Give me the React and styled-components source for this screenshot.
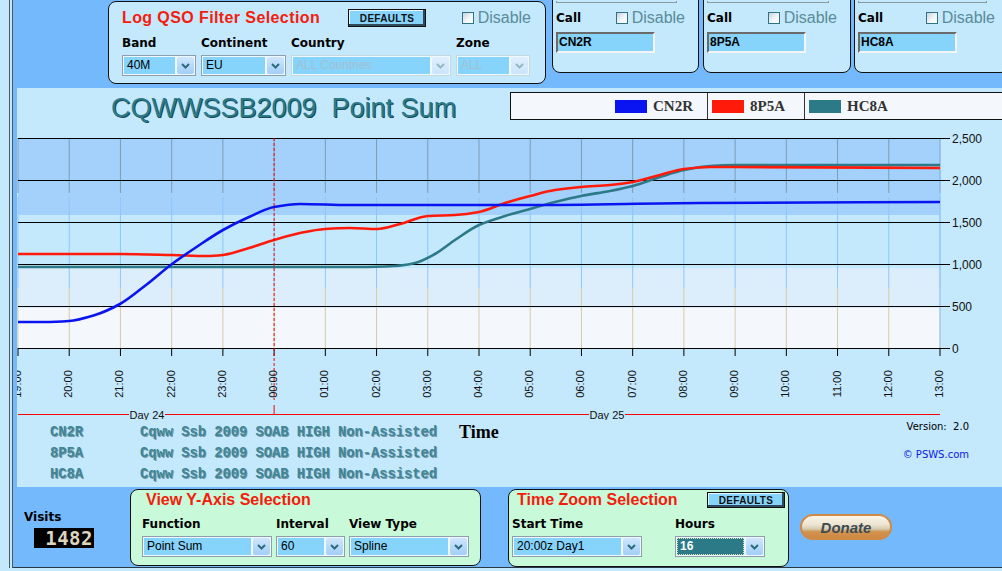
import { Fragment } from 'react';
import styled, { createGlobalStyle } from 'styled-components';

const GlobalStyle = createGlobalStyle`
  html, body { margin: 0; padding: 0; }
  body {
    background: #c4e8fc;
    font-family: "Liberation Sans", Arial, sans-serif;
    overflow: hidden;
  }
`;

const LIGHT = '#c4e8fc';
const BLUE = '#74b9fc';
const FIELD = '#86d4fc';
const RED = '#f41c0c';
const TEAL = '#2c7a88';

const Page = styled.div`
  display: flex;
  width: 1002px;
  height: 571px;
  overflow: hidden;
  background: ${LIGHT};
`;

const LeftRail = styled.div`
  width: 9px;
  flex-shrink: 0;
  height: 568px;
  border-right: 4px double #4b5860;
`;

const Main = styled.div`
  flex: 1;
  display: flex;
  flex-direction: column;
  height: 568px;
  box-sizing: border-box;
  border-bottom: 1px solid #2a3a44;
  background: ${BLUE};
  padding-left: 4px;
  min-width: 0;
`;

const TopBar = styled.div`
  display: flex;
  align-items: flex-start;
  height: 88px;
  flex-shrink: 0;
`;

const FilterPanel = styled.div`
  margin: 1px 0 0 91px;
  width: 438px;
  height: 83px;
  box-sizing: border-box;
  border: 1px solid #111;
  border-radius: 8px;
  background: ${LIGHT};
  padding: 7px 14px 0 13px;
  flex-shrink: 0;
`;

const PanelHead = styled.div`
  display: flex;
  align-items: center;
  height: 18px;
`;

const PanelTitle = styled.div`
  color: ${RED};
  font: bold 16px "Liberation Sans", Arial, sans-serif;
  letter-spacing: ${p => p.$spacing || 0}px;
  padding-left: ${p => p.$indent || 0}px;
  white-space: nowrap;
`;

const DefaultsButton = styled.div`
  margin-left: ${p => p.$left || 'auto'};
  width: ${p => p.$w}px;
  height: ${p => p.$h}px;
  box-sizing: border-box;
  border: 1px solid #111;
  background: ${FIELD};
  box-shadow: inset -2px -2px 0 #2f4a5c, inset 1px 1px 0 #e8f6ff;
  font: bold 10px "Liberation Sans", Arial, sans-serif;
  letter-spacing: 0.3px;
  display: flex;
  align-items: center;
  justify-content: center;
  color: #111;
`;

const DisableWrap = styled.div`
  margin-left: auto;
  display: flex;
  align-items: center;
  gap: 4px;
  color: #5a8c99;
  font: 16px "Liberation Sans", Arial, sans-serif;
`;

const CheckBox = styled.div`
  width: 12px;
  height: 12px;
  box-sizing: border-box;
  border: 1px solid #2f7482;
  background: linear-gradient(135deg, #c8d2dc 0%, #f2f6fa 55%, #ffffff 100%);
`;

const FieldGrid = styled.div`
  display: grid;
  grid-template-columns: ${p => p.$cols};
  column-gap: ${p => p.$gap}px;
  row-gap: 5px;
  margin-top: ${p => p.$top}px;
`;

const FieldLabel = styled.div`
  font: bold 12px "DejaVu Sans", Verdana, sans-serif;
  line-height: 14px;
  color: #000;
  white-space: nowrap;
`;

const SelectBox = styled.div`
  display: flex;
  height: 21px;
  box-sizing: border-box;
  border: 1px solid ${p => (p.$disabled ? '#c6d8dc' : '#8e9eac')};
  background: #eef8ff;
  padding: 1px;
  gap: 2px;
`;

const SelectValue = styled.div`
  flex: 1;
  min-width: 0;
  background: ${p => (p.$focused ? TEAL : FIELD)};
  color: ${p => (p.$disabled ? '#a4bfcc' : p.$focused ? '#fff' : '#000')};
  font: 12px "Liberation Sans", Arial, sans-serif;
  font-weight: ${p => (p.$focused ? 'bold' : 'normal')};
  line-height: 17px;
  padding-left: 3px;
  outline: ${p => (p.$focused ? '1px dotted #d8e8b0' : 'none')};
  outline-offset: -1px;
  white-space: nowrap;
  overflow: hidden;
`;

const SelectArrow = styled.div`
  width: 17px;
  border-radius: 2px;
  background: linear-gradient(#cfe6fc, #a2cef8);
  display: flex;
  align-items: center;
  justify-content: center;
  opacity: ${p => (p.$disabled ? 0.45 : 1)};
`;

const CallPanel = styled.div`
  margin: -10px 0 0 ${p => p.$left}px;
  width: ${p => p.$w}px;
  height: 83px;
  box-sizing: border-box;
  border: 1px solid #111;
  border-radius: 8px;
  background: ${LIGHT};
  padding: 10px 13px 0 3px;
  flex-shrink: 0;
`;

const Stub = styled.div`
  height: 1px;
  margin-right: 8px;
  border: 1px solid #8a9aa0;
  border-top: none;
`;

const CallRow = styled.div`
  display: flex;
  align-items: center;
  height: 14px;
  margin-top: 8px;
`;

const CallInput = styled.div`
  margin-top: 7px;
  width: 99px;
  height: 21px;
  box-sizing: border-box;
  border: 2px solid;
  border-color: #6a6a6a #f4f4f4 #f4f4f4 #6a6a6a;
  background: ${FIELD};
  font: bold 12px "Liberation Sans", Arial, sans-serif;
  line-height: 17px;
  padding-left: 1px;
  color: #000;
`;

const ChartArea = styled.div`
  height: 399px;
  flex-shrink: 0;
  background: ${LIGHT};
  display: flex;
  flex-direction: column;
  overflow: hidden;
`;

const ChartHead = styled.div`
  display: grid;
  grid-template-columns: 493px 1fr;
  height: 40px;
  flex-shrink: 0;
`;

const ChartTitle = styled.div`
  padding: 5px 0 0 94px;
  line-height: 30px;
  font: 27px "Liberation Sans", Arial, sans-serif;
  color: ${TEAL};
  text-shadow: 1px 1px 0 #174b56;
  white-space: pre;
`;

const Legend = styled.div`
  margin: 4px -10px 0 0;
  height: 28px;
  box-sizing: border-box;
  border: 1px solid #111;
  background: #f4f8fc;
  display: flex;
  padding-left: 104px;
`;

const LegendItem = styled.div`
  display: flex;
  align-items: center;
  gap: 6px;
  padding: 0 14px 0 ${p => (p.$first ? 0 : 4)}px;
  border-right: ${p => (p.$last ? 'none' : '1px solid #333')};
`;

const Swatch = styled.div`
  width: 32px;
  height: 13px;
  background: ${p => p.$color};
`;

const LegendLabel = styled.div`
  width: 40px;
  font: bold 15px "Liberation Serif", "Times New Roman", serif;
  color: #333;
`;

const Plot = styled.svg`
  display: block;
  flex-shrink: 0;
`;

const Info = styled.div`
  display: flex;
  height: 67px;
  box-sizing: border-box;
  padding: 2px 33px 0 33px;
`;

const EntryGrid = styled.div`
  display: grid;
  grid-template-columns: 90px auto;
  grid-auto-rows: 21px;
  align-items: center;
  font: bold 13.75px "Liberation Mono", "Courier New", monospace;
  color: #3f8696;
  text-shadow: 1px 1px 0 rgba(22, 52, 62, 0.45);
  white-space: pre;
`;

const TimeLabel = styled.div`
  margin-left: 22px;
  line-height: 21px;
  font: bold 18px "Liberation Serif", "Times New Roman", serif;
  color: #000;
`;

const Meta = styled.div`
  margin-left: auto;
  display: flex;
  flex-direction: column;
  align-items: flex-end;
  font: 10px "DejaVu Sans", Verdana, sans-serif;
  line-height: 10px;
  white-space: pre;
`;

const Credit = styled.div`
  margin-top: 18px;
  color: #0a18e8;
`;

const BottomBar = styled.div`
  display: flex;
  align-items: flex-start;
  height: 80px;
`;

const VisitsBlock = styled.div`
  width: 106px;
  margin-left: 7px;
  padding-top: 23px;
  flex-shrink: 0;
`;

const VisitsLabel = styled.div`
  font: bold 12px "DejaVu Sans", Verdana, sans-serif;
  line-height: 14px;
`;

const Counter = styled.div`
  margin: 4px 0 0 10px;
  width: 60px;
  height: 20px;
  background: #000;
  color: #ddd4bc;
  font: bold 19px "DejaVu Sans Mono", monospace;
  line-height: 20px;
  text-align: right;
  letter-spacing: 0.5px;
  padding-right: 1px;
  box-sizing: border-box;
  overflow: hidden;
`;

const GreenPanel = styled.div`
  margin: 2px 0 0 ${p => p.$left || 0}px;
  width: ${p => p.$w}px;
  height: ${p => p.$h}px;
  box-sizing: border-box;
  border: 1px solid #111;
  border-radius: 8px;
  background: #c8f9d8;
  padding: 1px ${p => p.$right || 0}px 0 ${p => p.$pad}px;
  flex-shrink: 0;
`;

const DonateButton = styled.div`
  margin: 27px 0 0 11px;
  width: 92px;
  height: 26px;
  box-sizing: border-box;
  border: 2px solid #d08a44;
  border-radius: 13px;
  background: linear-gradient(#fbf6ea 0%, #ece4d0 40%, #d6ccb2 58%, #d2924e 72%, #cf8a46 100%);
  display: flex;
  align-items: center;
  justify-content: center;
  font: italic bold 15px "Liberation Sans", Arial, sans-serif;
  color: #3e4a52;
  flex-shrink: 0;
`;

function Chevron() {
  return (
    <svg width="9" height="6" viewBox="0 0 9 6">
      <path d="M1 1 L4.5 4.5 L8 1" fill="none" stroke="#2e6c7c" strokeWidth="2" />
    </svg>
  );
}

function Select({ value, disabled, focused }) {
  return (
    <SelectBox $disabled={disabled}>
      <SelectValue $disabled={disabled} $focused={focused}>{value}</SelectValue>
      <SelectArrow $disabled={disabled}><Chevron /></SelectArrow>
    </SelectBox>
  );
}

function Disable() {
  return (
    <DisableWrap>
      <CheckBox />
      Disable
    </DisableWrap>
  );
}

// chart geometry: svg origin sits at page (17, 128)
const HOUR = 922 / 18;
const hx = i => 1 + i * HOUR;
const vy = v => 220 - v * 0.084;

function monotone(raw) {
  const pts = raw.map(([x, y]) => [x - 17, y - 128]);
  const n = pts.length;
  const dx = [];
  const m = [];
  for (let i = 0; i < n - 1; i++) {
    dx[i] = pts[i + 1][0] - pts[i][0];
    m[i] = (pts[i + 1][1] - pts[i][1]) / dx[i];
  }
  const t = [m[0]];
  for (let i = 1; i < n - 1; i++) {
    if (m[i - 1] * m[i] <= 0) t[i] = 0;
    else {
      const w1 = 2 * dx[i] + dx[i - 1];
      const w2 = dx[i] + 2 * dx[i - 1];
      t[i] = (w1 + w2) / (w1 / m[i - 1] + w2 / m[i]);
    }
  }
  t[n - 1] = m[n - 2];
  let d = `M${pts[0][0]},${pts[0][1]}`;
  for (let i = 0; i < n - 1; i++) {
    const h = dx[i] / 3;
    d += ` C${pts[i][0] + h},${pts[i][1] + t[i] * h} ${pts[i + 1][0] - h},${pts[i + 1][1] - t[i + 1] * h} ${pts[i + 1][0]},${pts[i + 1][1]}`;
  }
  return d;
}

const series = [
  {
    color: '#2c7a88',
    points: [[18, 267], [300, 267], [360, 267], [395, 266], [415, 263], [435, 254], [455, 240], [479, 225], [505, 216], [530, 209], [555, 202], [581, 196], [610, 191], [633, 186], [660, 177], [684, 170], [710, 166], [735, 165], [940, 165]],
  },
  {
    color: '#ff1a0a',
    points: [[18, 254], [120, 254], [172, 255], [207, 256], [223, 255], [249, 248], [274, 240], [300, 233], [325, 229], [350, 228], [377, 229], [400, 224], [428, 216], [455, 215], [479, 212], [505, 203], [530, 196], [555, 190], [581, 187], [610, 185], [633, 182], [660, 175], [684, 169], [710, 167], [735, 167], [940, 168]],
  },
  {
    color: '#0a14f0',
    points: [[18, 322], [45, 322], [69, 321], [95, 315], [120, 304], [146, 285], [172, 264], [198, 246], [223, 230], [249, 217], [274, 207], [300, 204], [350, 205], [428, 205], [530, 205], [700, 203], [940, 202]],
  },
];

const yTicks = [2500, 2000, 1500, 1000, 500, 0];
const hours = Array.from({ length: 19 }, (_, i) => `${String((19 + i) % 24).padStart(2, '0')}:00`);

function PointChart() {
  return (
    <Plot width="985" height="292" viewBox="0 0 985 292">
      <rect x="1" y="10" width="922" height="77" fill="#a4d0fc" />
      <rect x="1" y="140" width="922" height="40" fill="#dceefc" />
      <rect x="1" y="180" width="922" height="40" fill="#f4f8fc" />

      {hours.map((_, i) => (
        <g key={i}>
          <line x1={hx(i)} x2={hx(i)} y1="10" y2="65" stroke="#7c9cb4" />
          <line x1={hx(i)} x2={hx(i)} y1="69" y2="160" stroke="#8ec6fa" />
          <line x1={hx(i)} x2={hx(i)} y1="160" y2="220" stroke="#d6cba8" />
          <line x1={hx(i)} x2={hx(i)} y1="220" y2="228" stroke="#000" />
        </g>
      ))}
      <line x1="923" x2="923" y1="10" y2="220" stroke="#8ec6fa" />

      {yTicks.map(v => (
        <g key={v}>
          <line x1="1" x2="933" y1={vy(v) + 0.5} y2={vy(v) + 0.5} stroke="#000" />
          <text x="935" y={vy(v) + 1} dominantBaseline="central" fontSize="12" fontFamily="Liberation Sans, Arial, sans-serif" fill="#111">
            {v.toLocaleString('en-US')}
          </text>
        </g>
      ))}

      {series.map(s => (
        <path key={s.color} d={monotone(s.points)} fill="none" stroke={s.color} strokeWidth="2.6" strokeLinejoin="round" />
      ))}

      <line x1={hx(5)} x2={hx(5)} y1="10" y2="272" stroke="#ff0000" strokeDasharray="3 2" />
      <line x1={hx(5)} x2={hx(5)} y1="277" y2="286" stroke="#ff0000" />

      {hours.map((h, i) => (
        <text
          key={h + i}
          x={hx(i) - 1}
          y="256"
          transform={`rotate(-90 ${hx(i) - 1} 256)`}
          textAnchor="middle"
          dominantBaseline="central"
          fontSize="11"
          fontFamily="Liberation Sans, Arial, sans-serif"
          fill="#111"
        >
          {h}
        </text>
      ))}

      <line x1="1" x2="923" y1="286.5" y2="286.5" stroke="#ff0000" />
      <rect x="112" y="282" width="36" height="10" fill={LIGHT} />
      <text x="130" y="291" textAnchor="middle" fontSize="11" fontFamily="Liberation Sans, Arial, sans-serif" fill="#111">Day 24</text>
      <rect x="572" y="282" width="36" height="10" fill={LIGHT} />
      <text x="590" y="291" textAnchor="middle" fontSize="11" fontFamily="Liberation Sans, Arial, sans-serif" fill="#111">Day 25</text>
    </Plot>
  );
}

const entries = [
  ['CN2R', 'Cqww Ssb 2009 SOAB HIGH Non-Assisted'],
  ['8P5A', 'Cqww Ssb 2009 SOAB HIGH Non-Assisted'],
  ['HC8A', 'Cqww Ssb 2009 SOAB HIGH Non-Assisted'],
];

const calls = [
  { call: 'CN2R', left: 6, w: 147 },
  { call: '8P5A', left: 4, w: 148 },
  { call: 'HC8A', left: 3, w: 155 },
];

function App() {
  return (
    <Page>
      <GlobalStyle />
      <LeftRail />
      <Main>
        <TopBar>
          <FilterPanel>
            <PanelHead>
              <PanelTitle $spacing={0.4}>Log QSO Filter Selection</PanelTitle>
              <DefaultsButton $left="28px" $w={78} $h={18}>DEFAULTS</DefaultsButton>
              <Disable />
            </PanelHead>
            <FieldGrid $cols="74px 85px 160px 74px" $gap={5} $top={9}>
              <FieldLabel>Band</FieldLabel>
              <FieldLabel>Continent</FieldLabel>
              <FieldLabel>Country</FieldLabel>
              <FieldLabel>Zone</FieldLabel>
              <Select value="40M" />
              <Select value="EU" />
              <Select value="ALL Countries" disabled />
              <Select value="ALL" disabled />
            </FieldGrid>
          </FilterPanel>

          {calls.map(c => (
            <CallPanel key={c.call} $left={c.left} $w={c.w}>
              <Stub />
              <CallRow>
                <FieldLabel>Call</FieldLabel>
                <Disable />
              </CallRow>
              <CallInput>{c.call}</CallInput>
            </CallPanel>
          ))}
        </TopBar>

        <ChartArea>
          <ChartHead>
            <ChartTitle>{'CQWWSSB2009  Point Sum'}</ChartTitle>
            <Legend>
              <LegendItem $first>
                <Swatch $color="#0a14f0" />
                <LegendLabel>CN2R</LegendLabel>
              </LegendItem>
              <LegendItem>
                <Swatch $color="#ff1a0a" />
                <LegendLabel>8P5A</LegendLabel>
              </LegendItem>
              <LegendItem $last>
                <Swatch $color="#2c7a88" />
                <LegendLabel>HC8A</LegendLabel>
              </LegendItem>
            </Legend>
          </ChartHead>

          <PointChart />

          <Info>
            <EntryGrid>
              {entries.map(([call, desc]) => (
                <Fragment key={call}>
                  <div>{call}</div>
                  <div>{desc}</div>
                </Fragment>
              ))}
            </EntryGrid>
            <TimeLabel>Time</TimeLabel>
            <Meta>
              <div>{'Version:  2.0'}</div>
              <Credit>© PSWS.com</Credit>
            </Meta>
          </Info>
        </ChartArea>

        <BottomBar>
          <VisitsBlock>
            <VisitsLabel>Visits</VisitsLabel>
            <Counter>1482</Counter>
          </VisitsBlock>

          <GreenPanel $w={351} $h={77} $pad={11}>
            <PanelHead>
              <PanelTitle $indent={4}>View Y-Axis Selection</PanelTitle>
            </PanelHead>
            <FieldGrid $cols="130px 69px 120px" $gap={4} $top={8}>
              <FieldLabel>Function</FieldLabel>
              <FieldLabel>Interval</FieldLabel>
              <FieldLabel>View Type</FieldLabel>
              <Select value="Point Sum" />
              <Select value="60" />
              <Select value="Spline" />
            </FieldGrid>
          </GreenPanel>

          <GreenPanel $left={27} $w={281} $h={78} $pad={3} $right={3}>
            <PanelHead>
              <PanelTitle $indent={5}>Time Zoom Selection</PanelTitle>
              <DefaultsButton $w={78} $h={16}>DEFAULTS</DefaultsButton>
            </PanelHead>
            <FieldGrid $cols="130px 90px" $gap={33} $top={8}>
              <FieldLabel>Start Time</FieldLabel>
              <FieldLabel>Hours</FieldLabel>
              <Select value="20:00z Day1" />
              <Select value="16" focused />
            </FieldGrid>
          </GreenPanel>

          <DonateButton>Donate</DonateButton>
        </BottomBar>
      </Main>
    </Page>
  );
}

export default App;
